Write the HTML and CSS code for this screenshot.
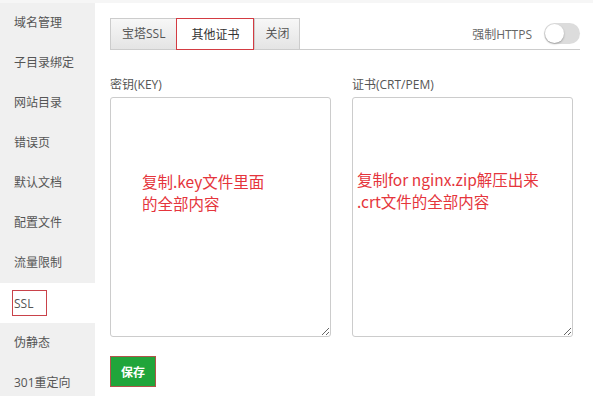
FILE: index.html
```html
<!DOCTYPE html>
<html lang="zh-CN">
<head>
    <meta charset="UTF-8">
    <meta name="viewport" content="width=device-width, initial-scale=1.0">
    <title>SSL</title>
    <link rel="stylesheet" href="styles.css">
</head>
<body>
    <div class="layout">
        <div class="sidebar">
            <div class="menu-item">域名管理</div>
            <div class="menu-item">子目录绑定</div>
            <div class="menu-item">网站目录</div>
            <div class="menu-item">错误页</div>
            <div class="menu-item">默认文档</div>
            <div class="menu-item">配置文件</div>
            <div class="menu-item">流量限制</div>
            <div class="menu-item active"><span class="mark">SSL</span></div>
            <div class="menu-item">伪静态</div>
            <div class="menu-item">301重定向</div>
        </div>

        <div class="main">
            <div class="tab-bar">
                <div class="tab">宝塔SSL</div>
                <div class="tab active">其他证书</div>
                <div class="tab">关闭</div>
                <div class="https">
                    <span>强制HTTPS</span>
                    <span class="switch"><span class="knob"></span></span>
                </div>
            </div>

            <div class="fields">
                <div class="field">
                    <label>密钥(KEY)</label>
                    <div class="box">
                        <textarea></textarea>
                        <div class="note note-key">
                            <div>复制.key文件里面</div>
                            <div>的全部内容</div>
                        </div>
                    </div>
                </div>
                <div class="field">
                    <label>证书(CRT/PEM)</label>
                    <div class="box">
                        <textarea></textarea>
                        <div class="note note-crt">
                            <div>复制for nginx.zip解压出来</div>
                            <div>.crt文件的全部内容</div>
                        </div>
                    </div>
                </div>
            </div>

            <button class="save">保存</button>
        </div>
    </div>
</body>
</html>
```

FILE: styles.css
```css
body {
    margin: 0;
    font-family: "Open Sans", "Noto Sans CJK SC", sans-serif;
    font-size: 12px;
    color: #555;
    background: #fff;
    border-top: 3px solid #f6f6f6;
}

.layout {
    display: flex;
    height: 393px;
    overflow: hidden;
}

.sidebar {
    width: 95px;
    background: #f0f0f0;
    flex-shrink: 0;
}

.menu-item {
    height: 40px;
    line-height: 40px;
    padding-left: 14px;
    color: #555;
}

.menu-item.active {
    background: #fff;
    padding-left: 12px;
    display: flex;
    align-items: center;
}

.mark {
    border: 1px solid #c9424a;
    height: 26px;
    line-height: 26px;
    width: 35px;
    padding-left: 1px;
    box-sizing: border-box;
}

.main {
    flex: 1;
    padding: 15px 13px 0 15px;
}

.tab-bar {
    display: flex;
    align-items: flex-end;
    height: 31px;
    border-bottom: 1px solid #ccc;
}

.tab {
    height: 30px;
    line-height: 30px;
    padding: 0 11px;
    border: 1px solid #ccc;
    border-bottom: none;
    border-right: none;
    background: linear-gradient(#f7f7f7, #e4e4e4);
    color: #555;
}

.tab:nth-child(3) {
    border-right: 1px solid #ccc;
    padding: 0 10px;
}

.tab.active {
    background: #fff;
    border: 1px solid #d33b42;
    height: 32px;
    line-height: 31px;
    margin-bottom: -1px;
    padding: 0 14px;
    box-sizing: border-box;
    color: #333;
}

.https {
    margin-left: auto;
    align-self: center;
    display: flex;
    align-items: center;
    gap: 12px;
    color: #666;
}

.switch {
    width: 36px;
    height: 21px;
    border-radius: 11px;
    background: #dcdcdc;
    display: flex;
    align-items: center;
    padding-left: 1px;
    box-sizing: border-box;
}

.knob {
    width: 19px;
    height: 19px;
    border-radius: 50%;
    background: #fff;
    box-shadow: 0 1px 2px rgba(0, 0, 0, 0.3);
}

.fields {
    display: flex;
    gap: 21px;
    margin-top: 26px;
}

.field {
    width: 221px;
}

.field label {
    display: block;
    line-height: 18px;
    margin-bottom: 3px;
    color: #555;
}

.box {
    position: relative;
}

textarea {
    display: block;
    width: 221px;
    height: 240px;
    box-sizing: border-box;
    border: 1px solid #ccc;
    border-radius: 3px;
    margin: 0;
    font-family: inherit;
}

.note {
    position: absolute;
    color: #e5353c;
    font-size: 15.5px;
    line-height: 22px;
    font-family: "Noto Sans CJK SC", sans-serif;
    white-space: nowrap;
    pointer-events: none;
}

.note-key {
    left: 32px;
    top: 73px;
}

.note-crt {
    left: 5px;
    top: 71px;
}

.save {
    margin-top: 19px;
    width: 46px;
    height: 31px;
    background: #20a53a;
    color: #fff;
    border: 1px solid #b0544a;
    font-weight: bold;
    font-size: 12px;
    font-family: "Noto Sans CJK SC", sans-serif;
    padding: 0;
    cursor: pointer;
}
```
